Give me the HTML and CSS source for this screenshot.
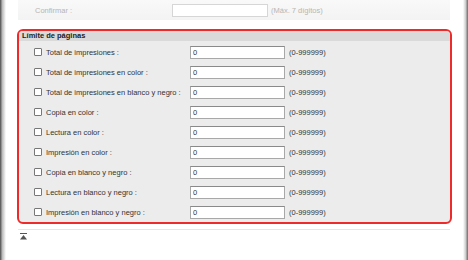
FILE: index.html
```html
<!DOCTYPE html>
<html>
<head>
    <meta charset="utf-8">
    <link rel="stylesheet" href="styles.css">
</head>
<body>
<div class="frame">
    <div class="shade-left"></div>
    <div class="content">
        <div class="confirm-row">
            <span class="confirm-label">Confirmar :</span>
            <input class="confirm-input" type="text" disabled>
            <span class="confirm-hint">(Máx. 7 dígitos)</span>
        </div>

        <div class="limits">
            <div class="limits-head">Límite de páginas</div>
            <div class="limits-body">
                <div class="row">
                    <label class="row-label"><span class="check"></span>Total de impresiones :</label>
                    <input class="num" type="text" value="0">
                    <span class="range">(0-999999)</span>
                </div>
                <div class="row">
                    <label class="row-label"><span class="check"></span>Total de impresiones en color :</label>
                    <input class="num" type="text" value="0">
                    <span class="range">(0-999999)</span>
                </div>
                <div class="row">
                    <label class="row-label"><span class="check"></span>Total de impresiones en blanco y negro :</label>
                    <input class="num" type="text" value="0">
                    <span class="range">(0-999999)</span>
                </div>
                <div class="row">
                    <label class="row-label"><span class="check"></span>Copia en color :</label>
                    <input class="num" type="text" value="0">
                    <span class="range">(0-999999)</span>
                </div>
                <div class="row">
                    <label class="row-label"><span class="check"></span>Lectura en color :</label>
                    <input class="num" type="text" value="0">
                    <span class="range">(0-999999)</span>
                </div>
                <div class="row">
                    <label class="row-label"><span class="check"></span>Impresión en color :</label>
                    <input class="num" type="text" value="0">
                    <span class="range">(0-999999)</span>
                </div>
                <div class="row">
                    <label class="row-label"><span class="check"></span>Copia en blanco y negro :</label>
                    <input class="num" type="text" value="0">
                    <span class="range">(0-999999)</span>
                </div>
                <div class="row">
                    <label class="row-label"><span class="check"></span>Lectura en blanco y negro :</label>
                    <input class="num" type="text" value="0">
                    <span class="range">(0-999999)</span>
                </div>
                <div class="row">
                    <label class="row-label"><span class="check"></span>Impresión en blanco y negro :</label>
                    <input class="num" type="text" value="0">
                    <span class="range">(0-999999)</span>
                </div>
            </div>
        </div>

        <div class="sep"></div>
        <div class="to-top">
            <svg width="7" height="7" viewBox="0 0 7 7">
                <rect x="0" y="0" width="7" height="1" fill="#555"/>
                <polygon points="3.5,2 7,6.5 0,6.5" fill="#555"/>
            </svg>
        </div>
    </div>
    <div class="shade-right"></div>
</div>
</body>
</html>
```

FILE: styles.css
```css
body {
    margin: 0;
    background: #fff;
    font-family: "Liberation Sans", Arial, sans-serif;
    font-size: 7.5px;
    color: #333;
}

.frame {
    display: flex;
    height: 260px;
}

.shade-left {
    width: 6px;
    background: linear-gradient(to right, #4a4a4a, #bdbdbd 40%, #fff);
}
.shade-right {
    width: 5px;
    margin-left: auto;
    background: linear-gradient(to right, #fff, #d0d0d0 50%, #6a6a6a);
}

.content {
    width: 435px;
    margin-left: 11px;
}

.confirm-row {
    display: flex;
    align-items: center;
    height: 20px;
    width: 432px;
    margin-left: 1px;
    background: linear-gradient(to bottom, #f9f9f9, #f3f3f3);
}
.confirm-label {
    width: 137px;
    padding-left: 17px;
    color: #b5b5b5;
}
.confirm-input {
    box-sizing: border-box;
    width: 96px;
    height: 13px;
    margin: 0;
    border: 1px solid #d6d6d6;
    background: #fff;
}
.confirm-hint {
    margin-left: 3px;
    color: #b5b5b5;
}

.limits {
    margin-top: 9px;
    border: 2px solid #ee2b2b;
    border-radius: 6px;
    background: #ececec;
    overflow: hidden;
}
.limits-head {
    height: 10px;
    line-height: 10px;
    padding-left: 3px;
    background: #dadada;
    font-weight: bold;
    color: #222;
}
.limits-body {
    padding-top: 1px;
}

.row {
    display: flex;
    align-items: center;
    height: 20px;
}
.row-label {
    display: flex;
    align-items: center;
    width: 156px;
    padding-left: 15px;
    white-space: nowrap;
}
.check {
    box-sizing: border-box;
    width: 8px;
    height: 8px;
    margin-right: 4px;
    border: 1px solid #777;
    border-radius: 1px;
    background: #fff;
}
.num {
    box-sizing: border-box;
    width: 95px;
    height: 13px;
    margin: 0;
    padding: 0 2px;
    border: 1px solid #a8a8a8;
    border-top-color: #8a8a8a;
    background: #fff;
    font-family: inherit;
    font-size: 7.5px;
    color: #333;
}
.range {
    margin-left: 4px;
}

.sep {
    margin-top: 5px;
    width: 432px;
    margin-left: 1px;
    height: 1px;
    background: #e6e6e6;
}
.to-top {
    padding: 3px 0 0 3px;
    line-height: 0;
}
```
